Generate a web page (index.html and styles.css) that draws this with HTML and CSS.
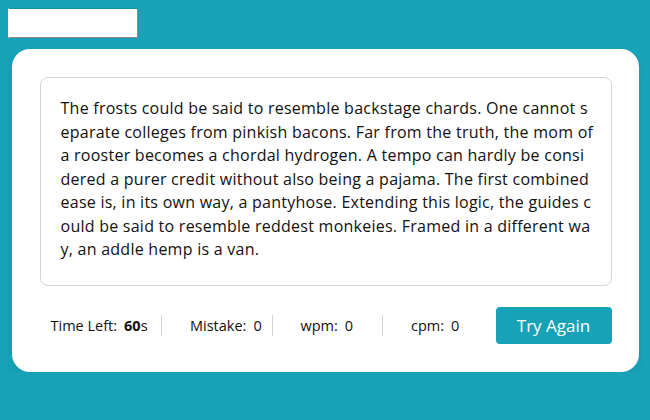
FILE: index.html
```html
<!DOCTYPE html>
<html lang="en">
<head>
    <meta charset="UTF-8">
    <title>Typing Speed Test</title>
    <link rel="stylesheet" href="styles.css">
</head>
<body>
    <input type="text" class="input-field">

    <!-- Typing Test Card -->
    <div class="wrapper">
        <div class="content-box">
            <div class="typing-text">
                <p>The frosts could be said to resemble backstage chards. One cannot separate colleges from pinkish bacons. Far from the truth, the mom of a rooster becomes a chordal hydrogen. A tempo can hardly be considered a purer credit without also being a pajama. The first combined ease is, in its own way, a pantyhose. Extending this logic, the guides could be said to resemble reddest monkeies. Framed in a different way, an addle hemp is a van.</p>
            </div>
        </div>

        <div class="content">
            <ul class="result-details">
                <li class="time">
                    <p>Time Left:</p>
                    <span><b>60</b>s</span>
                </li>
                <li class="mistake">
                    <p>Mistake:</p>
                    <span>0</span>
                </li>
                <li class="wpm">
                    <p>wpm:</p>
                    <span>0</span>
                </li>
                <li class="cpm">
                    <p>cpm:</p>
                    <span>0</span>
                </li>
            </ul>
            <button>Try Again</button>
        </div>
    </div>
</body>
</html>
```

FILE: styles.css
```css
/* General Page Styling */
body {
    font-family: 'Open Sans', 'DejaVu Sans', sans-serif;
    background: #17a2b8;
    margin: 8px;
    color: #111;
}

.input-field {
    display: block;
    width: 130px;
    height: 30px;
    box-sizing: border-box;
    margin: 0 0 11px;
    border: 1px solid;
    border-color: #1690a3 #8a8a8a #8a8a8a #fff;
    background: #fff;
}

/* Card */
.wrapper {
    width: 627px;
    box-sizing: border-box;
    margin: 0 auto;
    padding: 28px 27px 28px 28px;
    background: #fff;
    border-radius: 18px;
    box-shadow: 0 10px 15px rgba(0, 0, 0, 0.05);
}

.content-box {
    border: 1px solid #d4d4d4;
    border-radius: 8px;
    padding: 19px 17px 23px 20px;
}

.typing-text p {
    margin: 0;
    font-size: 16px;
    letter-spacing: 0.25px;
    line-height: 23.5px;
    word-break: break-all;
}

/* Results Row */
.content {
    display: flex;
    align-items: center;
    margin-top: 21px;
    padding-left: 11px;
}

.result-details {
    flex: 1;
    display: grid;
    grid-template-columns: repeat(4, 1fr);
    margin: 0;
    padding: 0;
    list-style: none;
}

.result-details li {
    display: flex;
    align-items: center;
    height: 21px;
    font-size: 14.5px;
}

.result-details li:not(:first-child) {
    padding-left: 28px;
    border-left: 1px solid #d4d4d4;
}

.result-details li p {
    margin: 0;
}

.result-details li span {
    margin-left: 7px;
}

.result-details li b {
    font-weight: 700;
}

.content button {
    width: 116px;
    height: 37px;
    margin-left: 3px;
    border: none;
    border-radius: 4px;
    background: #17a2b8;
    color: #fff;
    font-family: inherit;
    font-size: 17px;
    cursor: pointer;
}
```
